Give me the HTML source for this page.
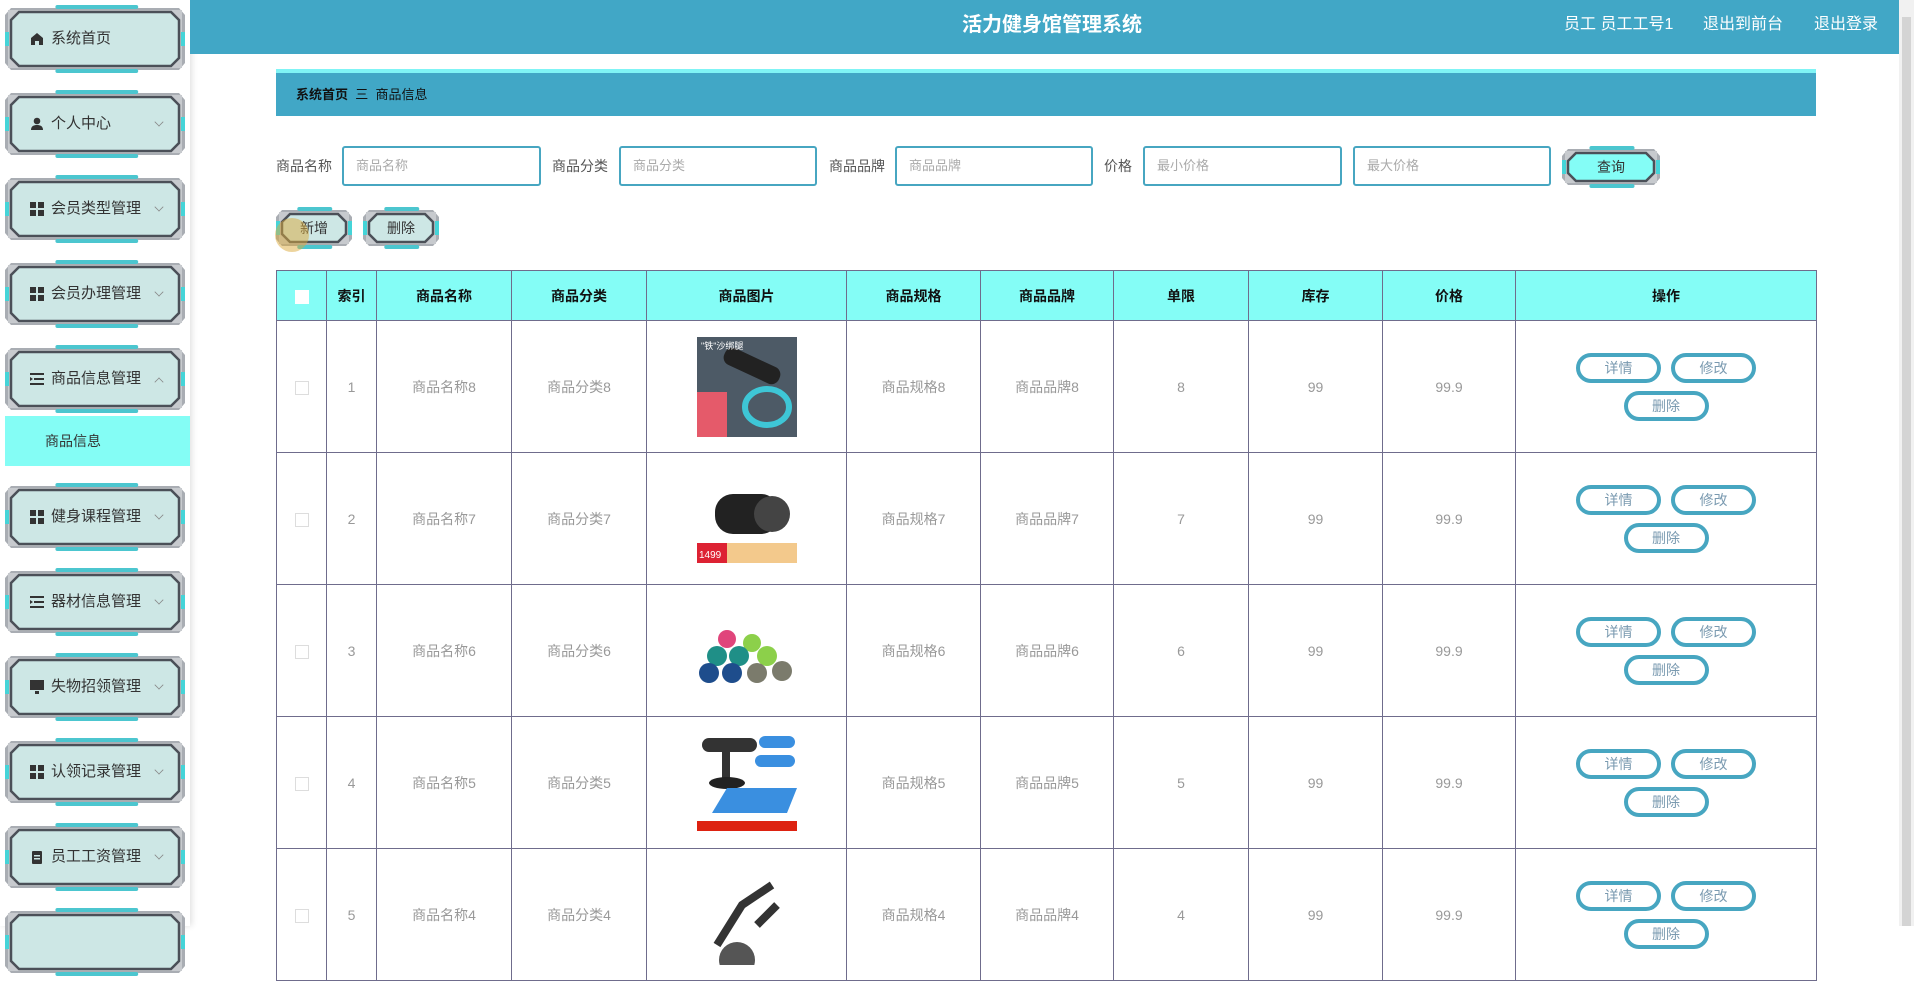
<!DOCTYPE html>
<html><head><meta charset="utf-8"><style>
*{box-sizing:border-box;margin:0;padding:0}
body{width:1914px;height:926px;overflow:hidden;background:#fff;font-family:"Liberation Sans","Noto Sans CJK SC",sans-serif;position:relative}
.side{position:absolute;left:0;top:0;width:190px;height:926px;background:#fff;box-shadow:2px 0 6px rgba(0,0,0,.12)}
.item{position:absolute;left:5px;width:180px;height:68px}
.item svg{position:absolute;left:0;top:0}
.item .t{position:absolute;left:46px;top:0;line-height:68px;font-size:15px;color:#333}
.item .ic{position:absolute;left:25px;top:27px;width:14px;height:14px}
.item .ar{position:absolute;left:150px;top:28px;width:8px;height:8px;border-right:1px solid #888;border-bottom:1px solid #888;transform:rotate(45deg) scale(.8)}
.item .ar.up{top:33px;transform:rotate(-135deg) scale(.8)}
.sub{position:absolute;left:5px;top:416px;width:185px;height:50px;background:#84fdf5;font-size:14px;color:#333;line-height:50px;padding-left:40px}
.hdr{position:absolute;left:190px;top:0;width:1709px;height:54px;background:#41a7c6}
.hdr .title{position:absolute;left:0;width:1724px;text-align:center;top:0;line-height:50px;color:#fff;font-size:20px;font-weight:bold}
.hdr .r{position:absolute;top:0;line-height:50px;color:#fff;font-size:16px}
.scroll{position:absolute;left:1899px;top:0;width:15px;height:926px;background:#f1f1f1}
.scroll div{position:absolute;left:3px;top:17px;width:9px;height:909px;background:#d4d4d4}
.bc{position:absolute;left:276px;top:69px;width:1540px;height:47px;background:#41a7c6;border-top:4px solid #7ff4f5;font-size:13px;line-height:43px;padding-left:20px;color:#111}
.lbl{position:absolute;top:146px;line-height:40px;font-size:14px;color:#555}
.inp{position:absolute;top:146px;height:40px;border:2px solid #47a6c1;border-radius:3px;font-size:13px;color:#aaa;line-height:36px;padding-left:12px}
.fb{position:absolute;width:78px;height:42px}
.fb span{position:absolute;left:0;width:100%;text-align:center;top:0;line-height:42px;font-size:14px;color:#333}
table{position:absolute;left:276px;top:270px;width:1541px;border-collapse:collapse;font-size:14px}
td,th{border:1px solid #6f6c8c;text-align:center;color:#999;font-weight:normal}
th{background:#84fdf6;color:#111;font-weight:bold;height:50px;font-size:14px}
td{height:132px}
.cb{display:inline-block;width:14px;height:14px;border:1px solid #ddd;background:#fff;vertical-align:middle}
.ops{width:200px;margin:0 auto;font-size:0;line-height:0}
.ob{display:inline-block;width:85px;height:30px;border:4px solid #47a6c1;border-radius:16px;line-height:22px;color:#7a9ab0;font-size:14px;margin:4px 5px}
</style></head><body>
<div class="side"></div>
<div class="sub">商品信息</div>
<div class="hdr"><div class="title">活力健身馆管理系统</div>
<div class="r" style="left:1374px">员工 员工工号1</div><div class="r" style="left:1513px">退出到前台</div><div class="r" style="left:1624px">退出登录</div></div>
<div class="scroll"><div></div></div>
<div class="bc"><b>系统首页</b>&nbsp;&nbsp;三&nbsp;&nbsp;商品信息</div>
<div class="lbl" style="left:276px">商品名称</div><div class="inp" style="left:342px;width:199px">商品名称</div>
<div class="lbl" style="left:552px">商品分类</div><div class="inp" style="left:619px;width:198px">商品分类</div>
<div class="lbl" style="left:829px">商品品牌</div><div class="inp" style="left:895px;width:198px">商品品牌</div>
<div class="lbl" style="left:1104px">价格</div><div class="inp" style="left:1143px;width:199px">最小价格</div>
<div class="inp" style="left:1353px;width:198px">最大价格</div>
<div id="btns"></div>
<table>
<tr><th style="width:50px"><span class="cb" style="border:none"></span></th><th style="width:50px">索引</th><th style="width:135px">商品名称</th><th style="width:135px">商品分类</th><th style="width:200px">商品图片</th><th style="width:134px">商品规格</th><th style="width:133px">商品品牌</th><th style="width:135px">单限</th><th style="width:134px">库存</th><th style="width:133px">价格</th><th>操作</th></tr>
<tbody id="tb"></tbody>
</table>
<script>
function frame(w,h,fill){
return `<svg width="${w}" height="${h}" viewBox="0 0 ${w} ${h}"><polygon points="6,3 ${w-6},3 ${w},10 ${w},${h-10} ${w-6},${h-3} 6,${h-3} 0,${h-10} 0,10" fill="#a9adb3"/><polygon points="3,5 ${w-3},5 ${w-3},${h-5} 3,${h-5}" fill="#c7cace"/><rect x="${w*0.28}" y="0" width="${w*0.46}" height="4" rx="2" fill="#4cc6cf"/><rect x="${w*0.28}" y="${h-4}" width="${w*0.46}" height="4" rx="2" fill="#4cc6cf"/><rect x="0" y="${h/2-7}" width="4" height="14" fill="#45d4d8"/><rect x="${w-4}" y="${h/2-7}" width="4" height="14" fill="#45d4d8"/><polygon points="14,7 ${w-14},7 ${w-6},15 ${w-6},${h-15} ${w-14},${h-7} 14,${h-7} 6,${h-15} 6,15" fill="${fill}" stroke="#4b5058" stroke-width="2.5"/></svg>`;}
const items=[["系统首页","home",0],["个人中心","user",1],["会员类型管理","grid",1],["会员办理管理","grid",1],["商品信息管理","list",2],["健身课程管理","grid",1],["器材信息管理","list",1],["失物招领管理","mon",1],["认领记录管理","grid",1],["员工工资管理","clip",1],["",null,0]];
const icons={home:'<svg class="ic" viewBox="0 0 14 14"><path d="M7 1L1 6v7h4V9h4v4h4V6z" fill="#333"/></svg>',user:'<svg class="ic" viewBox="0 0 14 14"><circle cx="7" cy="4" r="3.3" fill="#333"/><path d="M1 13c0-4 3-5 6-5s6 1 6 5z" fill="#333"/></svg>',grid:'<svg class="ic" viewBox="0 0 14 14"><rect x="0" y="0" width="6" height="6" fill="#333"/><rect x="8" y="0" width="6" height="6" fill="#333"/><rect x="0" y="8" width="6" height="6" fill="#333"/><rect x="8" y="8" width="6" height="6" fill="#333"/></svg>',list:'<svg class="ic" viewBox="0 0 14 14"><rect x="0" y="1" width="14" height="2" fill="#333"/><rect x="4" y="6" width="10" height="2" fill="#333"/><rect x="0" y="11" width="14" height="2" fill="#333"/><path d="M0 5l3 2-3 2z" fill="#333"/></svg>',mon:'<svg class="ic" viewBox="0 0 14 14"><rect x="0" y="0" width="14" height="10" fill="#333"/><rect x="5" y="11" width="4" height="3" fill="#333"/></svg>',clip:'<svg class="ic" viewBox="0 0 14 14"><rect x="2" y="1" width="10" height="13" rx="1" fill="#333"/><rect x="4" y="5" width="6" height="1.5" fill="#cde7e5"/><rect x="4" y="8" width="6" height="1.5" fill="#cde7e5"/></svg>'};
let s='';const tops=[5,90,175,260,345,483,568,653,738,823,908];
items.forEach((it,i)=>{s+=`<div class="item" style="top:${tops[i]}px">${frame(180,68,'#cde7e5')}${it[1]?icons[it[1]]:''}<div class="t">${it[0]}</div>${it[2]==1?'<div class="ar"></div>':it[2]==2?'<div class="ar up"></div>':''}</div>`});
document.querySelector('.side').innerHTML=s;
document.getElementById('btns').innerHTML=`<div class="fb" style="left:1562px;top:146px;width:98px">${frame(98,42,'#84fdf6')}<span>查询</span></div><div class="fb" style="left:276px;top:207px;width:76px">${frame(76,42,'#cde7e5')}<span>新增</span></div><div style="position:absolute;left:275px;top:218px;width:34px;height:34px;border-radius:50%;background:rgba(220,170,60,.5)"></div><div class="fb" style="left:363px;top:207px;width:76px">${frame(76,42,'#cde7e5')}<span>删除</span></div>`;
const imgs=[
'<rect width="100" height="100" fill="#4d5a66"/><rect x="0" y="55" width="30" height="45" fill="#e55a6a"/><ellipse cx="70" cy="70" rx="22" ry="18" fill="none" stroke="#3ec6d6" stroke-width="6"/><rect x="25" y="20" width="60" height="18" rx="8" fill="#222" transform="rotate(25 55 29)"/><text x="4" y="12" font-size="9" fill="#fff">"铁"沙绑腿</text>',
'<rect width="100" height="100" fill="#fff"/><rect x="18" y="25" width="64" height="40" rx="18" fill="#222"/><circle cx="75" cy="45" r="18" fill="#444"/><rect x="0" y="74" width="100" height="20" fill="#f3c98c"/><rect x="0" y="74" width="30" height="20" fill="#d23"/><text x="2" y="89" font-size="10" fill="#fff">1499</text>',
'<rect width="100" height="100" fill="#fff"/><circle cx="30" cy="38" r="9" fill="#e0457b"/><circle cx="55" cy="42" r="9" fill="#8cd04a"/><circle cx="20" cy="55" r="10" fill="#1f8f87"/><circle cx="42" cy="55" r="10" fill="#1f8f87"/><circle cx="70" cy="55" r="10" fill="#8cd04a"/><circle cx="12" cy="72" r="10" fill="#1e4d8c"/><circle cx="35" cy="72" r="10" fill="#1e4d8c"/><circle cx="60" cy="72" r="10" fill="#7b7b6c"/><circle cx="85" cy="70" r="10" fill="#7b7b6c"/>',
'<rect width="100" height="100" fill="#fff"/><rect x="5" y="5" width="55" height="14" rx="7" fill="#333"/><rect x="25" y="18" width="8" height="30" fill="#333"/><ellipse cx="30" cy="50" rx="18" ry="6" fill="#222"/><polygon points="15,80 90,80 100,55 30,55" fill="#3a8fe0"/><rect x="0" y="88" width="100" height="10" fill="#d21"/><rect x="62" y="3" width="36" height="12" rx="6" fill="#3a8fe0"/><rect x="58" y="22" width="40" height="12" rx="6" fill="#3a8fe0"/>',
'<rect width="100" height="100" fill="#fff"/><path d="M20 80L45 40L75 20M60 60L80 40" stroke="#333" stroke-width="8" fill="none"/><circle cx="40" cy="95" r="18" fill="#555"/>'];
let t='';for(let i=0;i<5;i++){const n=8-i;t+=`<tr><td><span class="cb"></span></td><td>${i+1}</td><td>商品名称${n}</td><td>商品分类${n}</td><td><svg width="100" height="100" style="vertical-align:middle">${imgs[i]}</svg></td><td>商品规格${n}</td><td>商品品牌${n}</td><td>${n}</td><td>99</td><td>99.9</td><td><div class="ops"><span class="ob">详情</span><span class="ob">修改</span><br><span class="ob">删除</span></div></td></tr>`}
document.getElementById('tb').innerHTML=t;
</script>
</body></html>
